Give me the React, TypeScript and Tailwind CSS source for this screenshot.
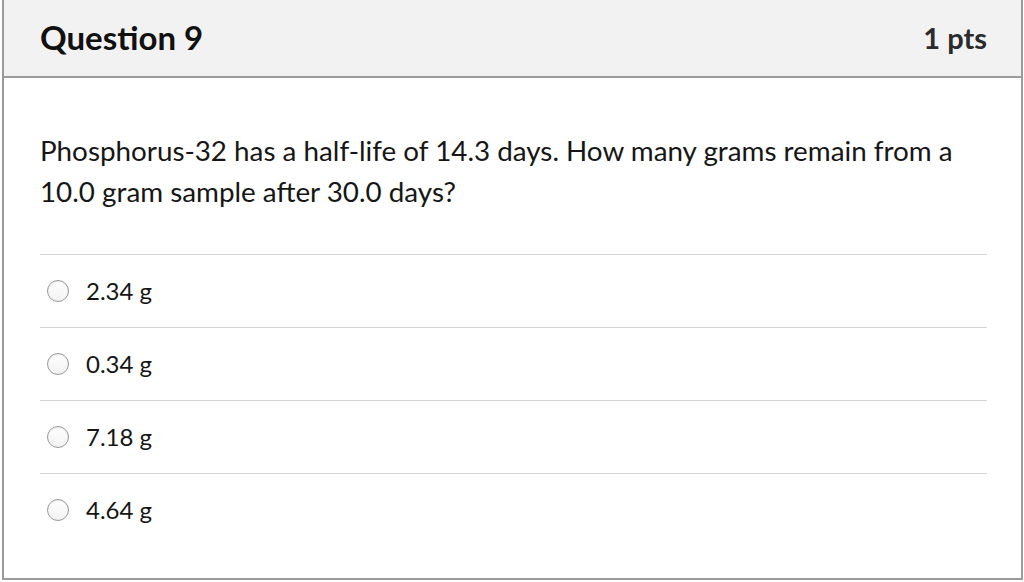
const answers = ["2.34 g", "0.34 g", "7.18 g", "4.64 g"];

export default function App() {
  return (
    <div className="h-[582px] w-[1024px] overflow-hidden bg-white pl-[2px] font-['Lato','Noto_Sans',sans-serif] text-[#1a1a1a]">
      <div className="flex h-[580px] w-[1021px] flex-col border-x-2 border-b-2 border-[#9b9b9b]">
        <div className="flex h-[78px] shrink-0 items-center justify-between border-b-2 border-[#9b9b9b] bg-[#f2f2f2] pl-9 pr-[34px] pb-[2px]">
          <h2 className="text-[33px] font-bold leading-none text-[#111]">Question 9</h2>
          <span className="text-[29px] font-bold leading-none text-[#2b2b2b]">1 pts</span>
        </div>

        <div className="flex-1 pl-9 pr-[34px]">
          <p className="mt-[52px] text-[27.8px] leading-[41px] text-[#161616]">
            Phosphorus-32 has a half-life of 14.3 days. How many grams remain from a 10.0 gram sample after 30.0 days?
          </p>

          <div className="mt-[42px]">
            {answers.map((a) => (
              <label
                key={a}
                className="flex h-[73px] items-center border-t border-[#d2d2d2] pl-[7px]"
              >
                <span className="h-[22px] w-[22px] shrink-0 rounded-full border border-[#999] bg-gradient-to-b from-white to-[#f2f2f2] shadow-[inset_0_1px_1px_rgba(0,0,0,0.08)]" />
                <span className="ml-[17px] text-[24px] text-[#161616]">{a}</span>
              </label>
            ))}
          </div>
        </div>
      </div>
    </div>
  );
}
